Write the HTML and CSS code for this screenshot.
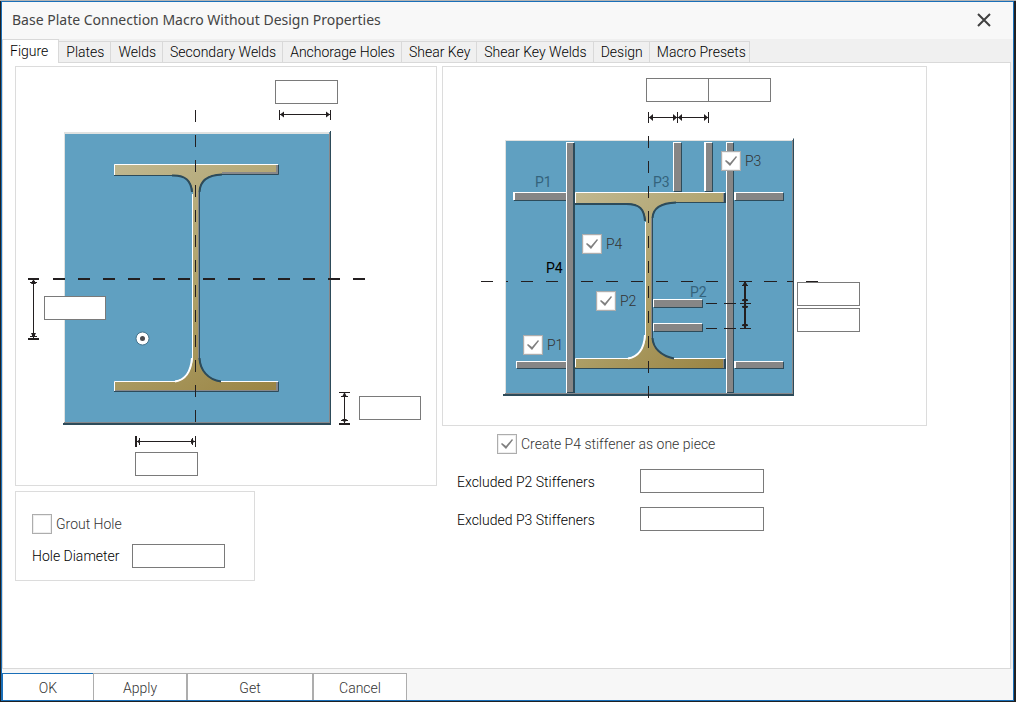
FILE: index.html
```html
<!DOCTYPE html>
<html lang="en">
<head>
<meta charset="utf-8">
<title>Base Plate Connection Macro Without Design Properties</title>
<link rel="stylesheet" href="styles.css">
</head>
<body>
<main class="dialog">
  <header class="titlebar">
    <h1 class="title">Base Plate Connection Macro Without Design Properties</h1>
    <button class="close" type="button" aria-label="Close">
      <svg width="14" height="14" viewBox="0 0 14 14" aria-hidden="true"><path d="M1 1L13 13M13 1L1 13" stroke="#404040" stroke-width="2" fill="none"/></svg>
    </button>
  </header>

  <div class="tabs" role="tablist">
    <button class="tab tab-active" type="button" role="tab" aria-selected="true">Figure</button>
    <button class="tab" type="button" role="tab">Plates</button>
    <button class="tab" type="button" role="tab">Welds</button>
    <button class="tab" type="button" role="tab">Secondary Welds</button>
    <button class="tab" type="button" role="tab">Anchorage Holes</button>
    <button class="tab" type="button" role="tab">Shear Key</button>
    <button class="tab" type="button" role="tab">Shear Key Welds</button>
    <button class="tab" type="button" role="tab">Design</button>
    <button class="tab" type="button" role="tab">Macro Presets</button>
  </div>

  <section class="pane" role="tabpanel">
    <div class="column">
      <div class="canvas">
        <svg class="drawing" width="420" height="418" viewBox="16 67 420 418" aria-hidden="true">
          <defs>
            <linearGradient id="brass" gradientUnits="userSpaceOnUse" x1="114" y1="164" x2="278" y2="391">
              <stop offset="0" stop-color="#c0b78f"/><stop offset="0.5" stop-color="#afa26c"/><stop offset="1" stop-color="#9a8443"/>
            </linearGradient>
          </defs>
          <path d="M64 132H330V423H64Z" fill="#60a0c1"/>
          <path d="M64 132H329V134H65V423H64Z" fill="#e0e2e1"/>
          <path d="M329 133H330V423H64V422H329Z" fill="#87888b"/>
          <path d="M330 131H331V425H63V423H330Z" fill="#2d4b5a"/>

          <path d="M114 164H278V174H222C208 175 200 180 199 192V358C200 370 208 380 221 382H278V391H114V381H175C184 380 191 372 193 358V192C191 181 186 175 172 175H114Z" fill="url(#brass)"/>
          <path d="M276 165H278V174H222V172H276Z" fill="#87888b"/>
          <path d="M276 382H278V391H115V390H276Z" fill="#87888b"/>
          <path d="M198.500 192V360" stroke="#87888b" fill="none"/>
          <path d="M278.500 165V174.500H222C208 175 200 180 199.500 192V358C200 370 208 380 221 381.500M278.500 382V391.500H114M114 175.500H172C186 175 191 181 192.500 192" stroke="#2d4b5a" fill="none"/>
          <path d="M172 175.500C186 175 191 181 192 192M222 174.500C208 175 200 180 199.500 192M199.500 358C200 370 208 380 221 381.500" stroke="#2d4b5a" stroke-width="2" fill="none"/>
          <path d="M114.500 175V164.500H278M192.500 194V358C191 370 186 380 175 381.500H114.500V391M221 381.500H278" stroke="#fff" fill="none"/>
          <path d="M192 358C191 370 186 380 175 381.500" stroke="#fff" stroke-width="2" fill="none"/>

          <path d="M195.500 110V423" stroke="#231f20" stroke-dasharray="12 13" fill="none"/>
          <path d="M28 279H39M53 279H365" stroke="#231f20" stroke-width="2" stroke-dasharray="12 13" fill="none"/>
          <circle cx="142.500" cy="338.500" r="6.500" fill="#fff" stroke="#46748d"/>
          <circle cx="142.500" cy="338.500" r="2.500" fill="#4c4c50"/>

          <g stroke="#231f20" fill="none">
            <path d="M279.500 110V120M330.500 110V120M280 114.500H330M33.500 279V339M136 441.500H195M195.500 436V447M344.500 392V424M339 392.500H350"/>
            <path d="M28 339H39M136 436V447M339 424H350" stroke-width="2"/>
            <path d="M30 282.500H37M32 281.500H35M30 336.500H37M32 335.500H35M139.500 438V445M192.500 438V445M341 396.500H348M341 420.500H348"/>
          </g>
          <path d="M280 114.500L284 111.500V117.500ZM330 114.500L326 111.500V117.500ZM33.500 279L36 284H31ZM33.500 338L36 333H31ZM137 441.500L140 439V444ZM195 441.500L191 439V444ZM344.500 392L347 397H342ZM344.500 423L347 419H342Z" fill="#231f20"/>
        </svg>
        <input class="field dim dim-edge-x" type="text" aria-label="Horizontal edge distance">
        <input class="field dim dim-narrow dim-hole-y" type="text" aria-label="Vertical hole offset">
        <input class="field dim dim-narrow dim-edge-y" type="text" aria-label="Vertical edge distance">
        <input class="field dim dim-hole-x" type="text" aria-label="Horizontal hole offset">
      </div>

      <div class="grout">
        <label class="check"><input class="box" type="checkbox"><span>Grout Hole</span></label>
        <div class="row">
          <label class="grout-label" for="hole">Hole Diameter</label>
          <input class="field grout-field" id="hole" type="text">
        </div>
      </div>
    </div>

    <div class="column">
      <div class="canvas">
        <svg class="drawing" width="483" height="358" viewBox="443 67 483 358" aria-hidden="true">
          <defs>
            <linearGradient id="brass2" gradientUnits="userSpaceOnUse" x1="575" y1="192" x2="724" y2="368">
              <stop offset="0" stop-color="#c0b78f"/><stop offset="0.5" stop-color="#afa26c"/><stop offset="1" stop-color="#9a8443"/>
            </linearGradient>
          </defs>
          <path d="M505 140H793V394H505Z" fill="#60a0c1"/>
          <path d="M505 140H792V141H506V394H505Z" fill="#e0e2e1"/>
          <path d="M792 140H793V394H505V393H792Z" fill="#87888b"/>
          <path d="M793 138.500H794V396H503V394H793Z" fill="#2d4b5a"/>

          <path d="M575 192H725V202H676C661 203 653 208 652 218V338C653 348 661 357 674 359H725V368H575V358H628C637 357 644 350 646 335V221C644 209 640 204 626 204H575Z" fill="url(#brass2)"/>
          <path d="M651.500 218V338" stroke="#87888b" fill="none"/>
          <path d="M575 203.500H626C640 204 644 209 645.500 221M575 368.500H724M674 358.500C661 356 653 348 652.500 338V218C653 208 661 203 676 202.500H724" stroke="#2d4b5a" fill="none"/>
          <path d="M575 204H626C640 204 644 209 645 221M676 202.500C661 203 653 208 652.500 218M652.500 338C653 348 661 356 674 358.500" stroke="#2d4b5a" stroke-width="2" fill="none"/>
          <path d="M575.500 203V192.500H725M645.500 222V335C644 350 637 357 628 358.500H575.500V367M674 358.500H725" stroke="#fff" fill="none"/>
          <path d="M645 335C644 350 637 357 628 358.500" stroke="#fff" stroke-width="2" fill="none"/>
          <path d="M723 193H724V202H723ZM723 359H724V368H723Z" fill="#87888b"/>
          <path d="M724 193H726V203H724ZM724 359H726V369H724Z" fill="#2d4b5a"/>

          <g fill="#2d4b5a">
            <path d="M567 143H575V393H567ZM727 143H734V393H727ZM674 143H682V192H674ZM705 143H713V192H705ZM514 193H566V201H514ZM735 193H784V201H735ZM517 362H566V369H517ZM735 362H784V369H735ZM654 300H703V308H654ZM654 324H703V332H654Z"/>
          </g>
          <path d="M566 142H574V143H567V393H566ZM726 142H733V143H727V393H726ZM673 142H681V143H674V191H673ZM704 142H712V143H706V191H704ZM513 192H566V193H515V200H513ZM734 192H783V193H736V200H734ZM516 361H566V362H517V368H516ZM734 361H783V362H736V368H734ZM653 299H702V300H654V307H653ZM653 323H702V324H654V331H653Z" fill="#fff"/>
          <path d="M567 143H573V392H567ZM727 143H733V392H727ZM674 143H681V191H674ZM706 143H712V191H706ZM515 193H566V200H515ZM736 193H783V200H736ZM517 362H566V368H517ZM736 362H783V368H736ZM654 300H702V307H654ZM654 324H702V331H654Z" fill="#868686"/>

          <g stroke="#231f20" fill="none">
            <path d="M648.500 136V398" stroke-dasharray="12 13"/>
            <path d="M481 281.500H493M506 281.500H508M521 281.500H533M546 281.500H558M581 281.500H593M606 281.500H618M631 281.500H643M656 281.500H668M681 281.500H693M706 281.500H718M739 281.500H752M764 281.500H777M787 281.500H793M806 281.500H818"/>
            <path d="M706 303.500H717M724 303.500H736M740 303.500H751M706 328.500H717M724 328.500H736M740 328.500H751"/>
            <path d="M648.500 112V123M677.500 112V123M708.500 112V123M649 117.500H708"/>
            <path d="M745 282V328" stroke-width="2"/>
            <path d="M742 285.500H748M742 300.500H748M742 306.500H748M742 325.500H748"/>
          </g>
          <path d="M649 117.500L653 114V121ZM677 117.500L673 114V121ZM678 117.500L682 114V121ZM708 117.500L704 114V121ZM745 281L748 286H742ZM745 303L748 299H742ZM745 304L748 308H742ZM745 328L748 324H742Z" fill="#231f20"/>

          <g class="mark">
            <text x="535" y="187">P1</text>
            <text x="653" y="187">P3</text>
            <text x="690" y="297">P2</text>
          </g>
          <text class="mark-strong" x="546" y="273">P4</text>
        </svg>
        <input class="field dim dim-p3-a" type="text" aria-label="P3 first spacing">
        <input class="field dim dim-p3-b" type="text" aria-label="P3 second spacing">
        <input class="field dim dim-p2-a" type="text" aria-label="P2 first spacing">
        <input class="field dim dim-p2-b" type="text" aria-label="P2 second spacing">
        <label class="check pin pin-p3"><input class="box" type="checkbox" checked><span>P3</span></label>
        <label class="check pin pin-p4"><input class="box" type="checkbox" checked><span>P4</span></label>
        <label class="check pin pin-p2"><input class="box" type="checkbox" checked><span>P2</span></label>
        <label class="check pin pin-p1"><input class="box" type="checkbox" checked><span>P1</span></label>
      </div>

      <div class="options">
        <label class="check one-piece"><input class="box" type="checkbox" checked><span>Create P4 stiffener as one piece</span></label>
        <div class="row">
          <label class="option-label" for="ex2">Excluded P2 Stiffeners</label>
          <input class="field option-field" id="ex2" type="text">
        </div>
        <div class="row">
          <label class="option-label" for="ex3">Excluded P3 Stiffeners</label>
          <input class="field option-field" id="ex3" type="text">
        </div>
      </div>
    </div>
  </section>

  <footer class="actions">
    <button class="action action-default" type="button">OK</button>
    <button class="action" type="button">Apply</button>
    <button class="action action-wide" type="button">Get</button>
    <button class="action" type="button">Cancel</button>
  </footer>
</main>
</body>
</html>
```
FILE: styles.css
```css
* {
  box-sizing: border-box;
}

body {
  margin: 0;
  min-height: 100vh;
  display: flex;
  padding: 0 2px 1px 1px;
  border-top: 1px solid #b4b4b4;
  background: #1f2123;
  font-family: Roboto, "Liberation Sans", sans-serif;
  font-size: 14px;
  font-weight: 300;
  line-height: 20px;
  color: #000;
}

button,
input {
  margin: 0;
  font: inherit;
  color: inherit;
}

.dialog {
  flex: 1;
  display: flex;
  flex-direction: column;
  border: 1px solid #1a6fb8;
  background: #f0f0f0;
}

.titlebar {
  display: flex;
  align-items: center;
  justify-content: space-between;
  height: 37px;
  padding: 0 20px 2px 10px;
  background: #f8f8f8;
}

.title {
  margin: 0;
  font-family: "Noto Sans", "Open Sans", sans-serif;
  font-size: 14px;
  font-weight: 400;
  color: #444;
}

.close {
  display: flex;
  padding: 2px;
  border: 0;
  background: none;
}

.tabs {
  display: flex;
  align-items: flex-end;
  height: 23px;
}

.tab {
  height: 21px;
  padding: 0 6px 0 7px;
  border: 1px solid #d9d9d9;
  border-width: 1px 1px 0 0;
  background: #f0f0f0;
  white-space: nowrap;
}

.tab:last-child {
  padding-right: 3px;
}

.tab-active {
  position: relative;
  height: 24px;
  margin-bottom: -1px;
  padding: 0 10px 2px 7px;
  border-left-width: 1px;
  background: #fff;
}

.pane {
  flex: 1;
  display: flex;
  align-items: flex-start;
  gap: 5px;
  margin-right: 2px;
  padding: 3px 12px;
  border: 1px solid #d9d9d9;
  background: #fff;
}

.column {
  display: flex;
  flex-direction: column;
  align-items: flex-start;
  gap: 5px;
}

.canvas {
  position: relative;
  border: 1px solid #dcdcdc;
}

.drawing {
  display: block;
}

.mark {
  fill: #34637c;
  font-weight: 400;
}

.mark-strong {
  font-weight: 400;
}

.field {
  height: 24px;
  padding: 0 4px;
  border: 1px solid #7a7a7a;
  background: #fff;
}

.dim {
  position: absolute;
  width: 63px;
}

.dim-narrow {
  width: 62px;
}

.dim-edge-x { left: 259px; top: 13px; }
.dim-hole-y { left: 28px; top: 229px; }
.dim-edge-y { left: 343px; top: 329px; }
.dim-hole-x { left: 119px; top: 385px; }
.dim-p3-a { left: 203px; top: 11px; }
.dim-p3-b { left: 265px; top: 11px; }
.dim-p2-a { left: 354px; top: 215px; }
.dim-p2-b { left: 354px; top: 241px; }

.check {
  display: flex;
  align-items: center;
  gap: 4px;
  color: #333;
}

.box {
  appearance: none;
  display: grid;
  flex: none;
  width: 20px;
  height: 20px;
  border: 1px solid #adadad;
  background: #fff;
  box-shadow: inset 0 0 0 1px #eee;
}

.box:checked::before {
  content: "";
  width: 18px;
  height: 18px;
  background: #808080;
  clip-path: polygon(3px 9px, 4px 8px, 8px 11px, 14px 4px, 15px 5px, 8px 14px);
}

.pin {
  position: absolute;
}

.pin-p3 { left: 278px; top: 84px; }
.pin-p4 { left: 139px; top: 167px; }
.pin-p2 { left: 153px; top: 224px; }
.pin-p1 { left: 80px; top: 268px; }

.grout {
  display: flex;
  flex-direction: column;
  gap: 10px;
  width: 240px;
  padding: 22px 16px 12px;
  border: 1px solid #dcdcdc;
}

.row {
  display: flex;
  align-items: center;
}

.grout-label {
  width: 100px;
}

.grout-field {
  width: 93px;
}

.options {
  display: flex;
  flex-direction: column;
  gap: 14px;
  padding: 3px 0 0 15px;
}

.one-piece {
  padding: 0 0 1px 40px;
}

.option-label {
  width: 183px;
  padding-top: 2px;
}

.option-field {
  width: 124px;
}

.actions {
  display: flex;
  height: 31px;
  padding-top: 4px;
  background: #f7f7f7;
}

.action {
  width: 94px;
  padding: 2px 0 0;
  border: 1px solid #adadad;
  border-bottom: 0;
  background: #fff;
  color: #333;
}

.action-wide {
  width: 126px;
}

.action-default {
  width: 91px;
  border-color: #1a6fb8;
  border-right: 0;
}
```
